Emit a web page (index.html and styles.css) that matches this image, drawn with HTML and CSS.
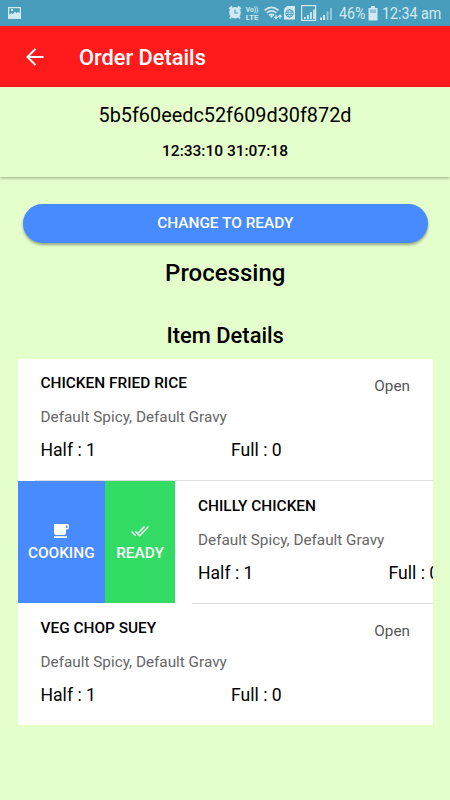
FILE: index.html
```html
<!DOCTYPE html>
<html lang="en">
<head>
<meta charset="utf-8">
<title>Order Details</title>
<link rel="stylesheet" href="styles.css">
</head>
<body>
<div class="statusbar">
  <svg class="gallery" width="14" height="14" viewBox="0 0 14 14"><path fill="currentColor" fill-rule="evenodd" d="M1 1h13v12H1zM2.300 2.300v6.500l2-1.800 1.500 1L8 5.500l1.500 1.700 1.200-1.200 2 1V2.300z"/><rect x="4" y="3" width="2" height="2" fill="currentColor"/></svg>
  <div class="indicators">
    <svg class="glyphs" width="110" height="20" viewBox="0 0 110 20" fill="none" stroke="currentColor">
      <circle cx="7" cy="9.700" r="5.800" fill="currentColor" stroke="none"/>
      <path stroke-width="2" d="M1.300 6l2.800-2.600M12.700 6L9.900 3.400M3.200 14l-1.200 1.300M10.800 14l1.200 1.300"/>
      <path class="cut" d="M7 6.500v3.500h3.200" stroke-width="1.200"/>
      <text x="17.800" y="8.900" class="tiny" textLength="12.500" lengthAdjust="spacingAndGlyphs">Vo))</text>
      <text x="17.800" y="16.700" class="tiny lte" textLength="12.500" lengthAdjust="spacingAndGlyphs">LTE</text>
      <path stroke-width="1.700" d="M36.500 7.300Q43.500 1.500 50.500 7.300M38.700 9.800Q43.500 6 48.300 9.800M41 12.200Q43.500 10.400 46 12.200"/>
      <path fill="currentColor" stroke="none" d="M42 13l1.500-1 1.500 1-1.500 2z"/>
      <path stroke-width="1.200" d="M48 12v3.500M46.300 13.800l1.700 1.800 1.700-1.800M52 15.500v-3.500M50.300 13.800l1.700-1.800 1.700 1.800"/>
      <path fill="currentColor" stroke="none" d="M56 6l3-3h8v13.500H56z"/>
      <g class="cut" stroke-width=".9"><circle cx="61.500" cy="10.300" r="3.800"/><ellipse cx="61.500" cy="10.300" rx="1.700" ry="3.800"/><path d="M57.700 9.200h7.600M57.700 11.500h7.600"/></g>
      <rect x="73.600" y="2.600" width="14" height="14.800" stroke-width="1.200"/>
      <path stroke-width="1.800" d="M77 16v-2M80 16v-4M83 16V9M86 16V6.500"/>
      <path stroke-width="2" d="M93 17v-2.500M96 17v-5"/><path class="dim" stroke-width="2" d="M99.500 17V8.500M103 17V5"/>
    </svg>
    <span class="percent">46%</span>
    <svg class="battery" width="10" height="15" viewBox="0 0 10 15" fill="currentColor"><path d="M3 0h4v2h2.500v12.500h-9V2H3z"/><path class="level" d="M2 3.500h6V7H2z"/></svg>
    <span class="clock">12:34 am</span>
  </div>
</div>
<header class="toolbar">
  <svg class="back" width="18" height="18" viewBox="0 0 18 18" fill="none" stroke="#fff" stroke-width="2"><path d="M17.500 9H2M9.500 .9L1.500 9 9.500 17.100"/></svg>
  <h1>Order Details</h1>
</header>
<section class="order">
  <div class="order-id">5b5f60eedc52f609d30f872d</div>
  <div class="order-time">12:33:10 31:07:18</div>
</section>
<main class="content">
  <button class="change">CHANGE TO READY</button>
  <h2 class="state">Processing</h2>
  <h3 class="heading">Item Details</h3>
  <div class="list">
    <div class="row">
      <div class="item">
        <div class="title">CHICKEN FRIED RICE</div>
        <div class="desc">Default Spicy, Default Gravy</div>
        <div class="amounts"><span>Half : 1</span><span>Full : 0</span></div>
        <span class="note">Open</span>
      </div>
    </div>
    <div class="row swiped">
      <div class="actions">
        <div class="action cooking">
          <svg width="16" height="16" viewBox="0 0 16 16" fill="#fff"><path fill-rule="evenodd" d="M1 1h13.500q1.500 0 1.500 1.500v2Q16 6.500 14 6.500h-1v3Q13 12 10.500 12h-7Q1 12 1 9.500zM13 2.500V5h1.500V2.500z"/><path d="M1 13.200h13V15H1z"/></svg>
          <span>COOKING</span>
        </div>
        <div class="action ready">
          <svg width="18" height="16" viewBox="0 0 18 16" fill="none" stroke="#fff" stroke-width="1.400"><path d="M.5 8.500l4.200 4.200M4.500 8.500l4.200 4.200L17.500 3.600M7.500 9.700L13.500 3.600"/></svg>
          <span>READY</span>
        </div>
      </div>
      <div class="item">
        <div class="title">CHILLY CHICKEN</div>
        <div class="desc">Default Spicy, Default Gravy</div>
        <div class="amounts"><span>Half : 1</span><span>Full : 0</span></div>
      </div>
    </div>
    <div class="row">
      <div class="item">
        <div class="title">VEG CHOP SUEY</div>
        <div class="desc">Default Spicy, Default Gravy</div>
        <div class="amounts"><span>Half : 1</span><span>Full : 0</span></div>
        <span class="note">Open</span>
      </div>
    </div>
  </div>
</main>
</body>
</html>
```
FILE: styles.css
```css
* { box-sizing: border-box; }
body { margin: 0; height: 800px; overflow: hidden; background: #e5ffcc; color: #000; font-family: Roboto, sans-serif; }
h1, h2, h3 { margin: 0; font-weight: 500; }
svg { display: block; flex: none; }
.statusbar { height: 26px; background: #489dbc; color: #d3e9f1; display: flex; justify-content: space-between; padding: 0 9px 0 7px; }
.gallery { margin-top: 6px; }
.indicators { display: flex; line-height: 28px; }
.glyphs { margin-top: 3px; margin-right: 1px; }
.cut { stroke: #489dbc; }
.dim { opacity: .55; }
.tiny { font: 700 7px Roboto, sans-serif; fill: currentColor; stroke: none; }
.lte { font-size: 8px; }
.percent, .clock { font-size: 16.700px; white-space: nowrap; transform: scaleX(.855); transform-origin: left; }
.percent { width: 29px; }
.battery { margin: 6px 0 0; }
.level { fill: #8ec2d6; }
.clock { width: 59px; margin-left: 4px; }
.toolbar { height: 61px; background: #ff1b1b; color: #fff; display: flex; align-items: center; padding-left: 26px; }
.toolbar h1 { margin-left: 35px; font-size: 21.800px; line-height: 30px; padding-top: 2px; }
.order { height: 90px; text-align: center; padding-top: 16px; box-shadow: 0 1px 3px rgba(0,0,0,.35); }
.order-id { font-size: 19.850px; line-height: 26px; }
.order-time { margin-top: 10px; font-size: 15.500px; line-height: 24px; font-weight: 500; }
.content { padding: 27px 17px 0 17.500px; text-align: center; }
.change { display: block; width: 404.500px; height: 39px; margin-left: 5.500px; padding: 0 0 2px; border: 0; border-radius: 20px; background: #488aff; color: #fff; font: 500 15.400px Roboto, sans-serif; box-shadow: 0 2px 3px rgba(0,0,0,.35); }
.state { margin-top: 14px; font-size: 24px; line-height: 32px; }
.heading { margin-top: 33px; font-size: 21.900px; line-height: 28px; }
.list { margin-top: 9px; height: 366px; overflow: hidden; background: #fff; text-align: left; }
.row { height: 122.400px; display: flex; overflow: hidden; }
.item { flex: none; position: relative; width: 415.500px; height: 122.400px; padding: 14px 23px 0; }
.swiped .item { padding-top: 14.800px; }
.row:not(:last-child) .item::after { content: ""; position: absolute; left: 17px; right: 0; bottom: 0; height: 1px; background: #dedede; }
.title { font-size: 15.400px; line-height: 20px; font-weight: 500; }
.desc { margin-top: 14px; font-size: 15.300px; line-height: 20px; color: #666; }
.amounts { display: flex; margin-top: 12px; font-size: 17.600px; line-height: 22px; }
.amounts span { width: 190.500px; flex: none; }
.note { position: absolute; right: 23px; top: 17px; font-size: 15.300px; line-height: 20px; color: #555; }
.actions { display: flex; flex: none; width: 157.500px; height: 122px; color: #fff; font-size: 15.400px; font-weight: 500; }
.action { display: flex; flex-direction: column; align-items: center; justify-content: center; gap: 4px; padding-top: 1px; line-height: 20px; }
.cooking { width: 87.500px; background: #488aff; }
.ready { width: 70px; background: #32db64; }
```
